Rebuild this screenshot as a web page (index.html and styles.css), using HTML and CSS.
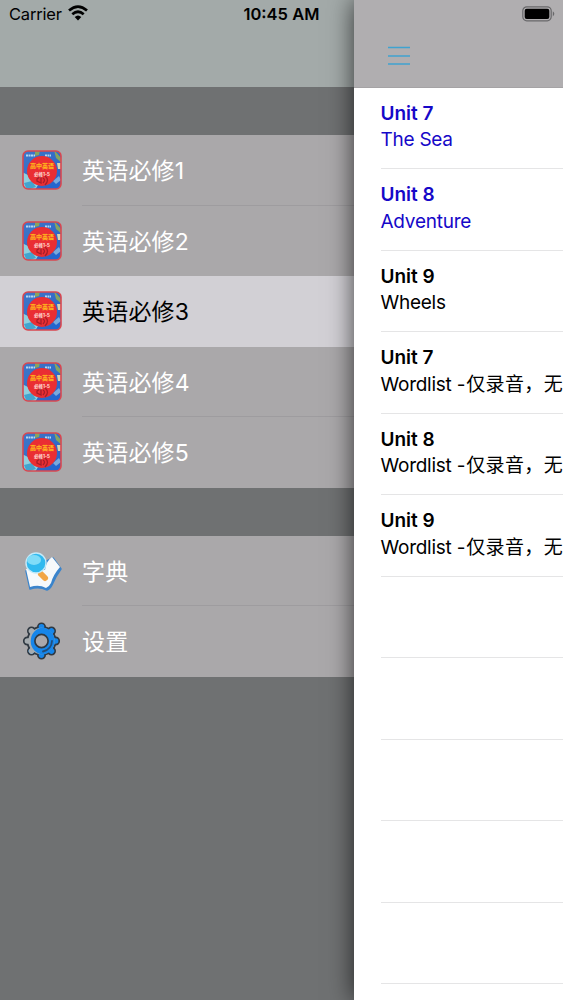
FILE: index.html
```
<!DOCTYPE html>
<html lang="zh-CN">
<head>
    <meta charset="UTF-8">
    <title>英语必修</title>
    <link rel="stylesheet" href="styles.css">
</head>
<body>
    <svg class="defs" width="0" height="0">
        <defs>
            <linearGradient id="sky" x1="0" y1="0" x2="1" y2="1">
                <stop offset="0" stop-color="#3f78c8"/>
                <stop offset="1" stop-color="#2860c8"/>
            </linearGradient>
            <clipPath id="bookClip"><rect x="1" y="1" width="38" height="38" rx="5"/></clipPath>
        </defs>
        <symbol id="book" viewBox="0 0 40 40">
            <g clip-path="url(#bookClip)">
                <rect width="40" height="40" fill="url(#sky)"/>
                <path d="M0 22l8 4 3 6 5 3-3 5H0z" fill="#8fd0dd"/>
                <path d="M2 33l8-2 4 6-9 3z" fill="#42a4cf"/>
                <path d="M13 0h5l-1 5-4 1zM32 0l8 9v4l-6-5z" fill="#86a460"/>
                <path d="M35 13h4v6h-3z" fill="#d8d5b0"/>
                <path d="M29 35l4-4 7 3v6H27z" fill="#2366cf"/>
                <path d="M31 31l6-5 2 4-5 4z" fill="#79a9dc"/>
                <path d="M4 5.5h9M23 5.5h6" stroke="#b5d7f0" stroke-width="1.8" stroke-dasharray="2 .5"/>
                <circle cx="20" cy="21" r="15" fill="#ea2e33"/>
                <path d="M15 29l4-3v7l-4-2zM21 28q3 2 0 5M23 26q5 4 0 9" fill="none" stroke="#a51f2a" stroke-width="1.3"/>
            </g>
            <rect x="1" y="1" width="38" height="38" rx="5" fill="none" stroke="#d94750" stroke-width="1.6"/>
        </symbol>
    </svg>

    <div class="app">
        <aside class="sidebar">
            <header class="sidebar-header">
                <span class="carrier">Carrier</span>
                <svg class="wifi" width="20" height="16" viewBox="0 0 20 16">
                    <path d="M1 5.6Q10-2.2 19 5.6M4.3 9.2Q10 4.3 15.7 9.2" fill="none" stroke="#000" stroke-width="2.7"/>
                    <path d="M6.7 12.1Q10 9 13.3 12.1L10 15.4z"/>
                </svg>
                <span class="time">10:45 AM</span>
            </header>

            <nav class="menu">
                <a class="item">
                    <svg class="icon" viewBox="0 0 40 40"><use href="#book"/><text class="book-title" x="20" y="18">高中英语</text><text class="book-sub" x="20" y="25.5">必修1-5</text></svg>
                    <span class="label">英语必修1</span>
                </a>
                <a class="item">
                    <svg class="icon" viewBox="0 0 40 40"><use href="#book"/><text class="book-title" x="20" y="18">高中英语</text><text class="book-sub" x="20" y="25.5">必修1-5</text></svg>
                    <span class="label">英语必修2</span>
                </a>
                <a class="item active">
                    <svg class="icon" viewBox="0 0 40 40"><use href="#book"/><text class="book-title" x="20" y="18">高中英语</text><text class="book-sub" x="20" y="25.5">必修1-5</text></svg>
                    <span class="label">英语必修3</span>
                </a>
                <a class="item">
                    <svg class="icon" viewBox="0 0 40 40"><use href="#book"/><text class="book-title" x="20" y="18">高中英语</text><text class="book-sub" x="20" y="25.5">必修1-5</text></svg>
                    <span class="label">英语必修4</span>
                </a>
                <a class="item">
                    <svg class="icon" viewBox="0 0 40 40"><use href="#book"/><text class="book-title" x="20" y="18">高中英语</text><text class="book-sub" x="20" y="25.5">必修1-5</text></svg>
                    <span class="label">英语必修5</span>
                </a>
            </nav>

            <nav class="menu">
                <a class="item">
                    <svg class="icon" viewBox="0 0 40 40">
                        <path d="M4 20l4 18q9-3 17 1 3-1 5-5 3-8 9-16l-8-11z" fill="#3a84cc" stroke="#3a84cc" stroke-width="1.5" stroke-linejoin="round"/>
                        <path d="M4 18l4 18q9-3 16 1 3-1 5-5 2-8 9-16l-8-10q-6 4-7 13-9-3-19-1z" fill="#f6f9fb"/>
                        <path d="M19 23l4 4" stroke="#f2a545" stroke-width="6" stroke-linecap="round"/>
                        <circle cx="14" cy="12" r="10" fill="#30b9ef" stroke="#c4e9f8" stroke-width="1.4"/>
                        <ellipse cx="12" cy="9" rx="7" ry="5" fill="#80dcf8"/>
                    </svg>
                    <span class="label">字典</span>
                </a>
                <a class="item">
                    <svg class="icon" viewBox="0 0 40 40">
                        <!-- dark outline -->
                        <circle cx="19.5" cy="20" r="15" fill="#303942"/>
                        <path class="teeth-outline" d="M19.5 5.900v28.200M5.400 20h28.200M9.500 10l20 20M29.500 10l-20 20"/>
                        <!-- body, left side stays grey -->
                        <path class="teeth" d="M19.5 5.900v28.200M19.5 20h14.100M19.5 20l10 10M29.5 10l-20 20"/>
                        <path class="teeth teeth-grey" d="M5.400 20h8M9.500 10l5 5M9.500 30l5-5"/>
                        <circle cx="19.5" cy="20" r="13.2" fill="#a7adb1"/>
                        <ellipse cx="20.7" cy="20" rx="12" ry="13.2" fill="#1686ea"/>
                        <circle cx="19.5" cy="20" r="6.6" fill="#aaa8ab" stroke="#303942" stroke-width="1.7"/>
                        <path d="M30 20q-.5 8.500-9 10.500" fill="none" stroke="#234d78" stroke-width="1.8" stroke-linecap="round"/>
                    </svg>
                    <span class="label">设置</span>
                </a>
            </nav>
        </aside>

        <main class="content">
            <header class="content-header">
                <svg class="battery" width="33" height="16" viewBox="0 0 33 16">
                    <rect x=".8" y=".8" width="28.4" height="14" rx="4" fill="none" stroke="#68686a" stroke-width="1.2"/>
                    <rect x="2.7" y="2.7" width="24.6" height="10.2" rx="2"/>
                    <path d="M30.8 5.2q3 2.6 0 5.2z" fill="#68686a"/>
                </svg>
                <svg class="burger" width="22" height="20" viewBox="0 0 22 20">
                    <path d="M0 1.5h22M0 10h22M0 18h22" stroke="#3fa3d0" stroke-width="1.3"/>
                </svg>
            </header>
            <ul class="units">
                <li class="unit read"><b>Unit 7</b><span>The Sea</span></li>
                <li class="unit read"><b>Unit 8</b><span>Adventure</span></li>
                <li class="unit"><b>Unit 9</b><span>Wheels</span></li>
                <li class="unit"><b>Unit 7</b><span>Wordlist -<i>仅录音，无</i></span></li>
                <li class="unit"><b>Unit 8</b><span>Wordlist -<i>仅录音，无</i></span></li>
                <li class="unit"><b>Unit 9</b><span>Wordlist -<i>仅录音，无</i></span></li>
                <li class="unit"></li>
                <li class="unit"></li>
                <li class="unit"></li>
                <li class="unit"></li>
                <li class="unit"></li>
            </ul>
        </main>
    </div>
</body>
</html>
```
FILE: styles.css
```
* {
    box-sizing: border-box;
}

body {
    margin: 0;
    font-family: Inter, "Noto Sans CJK SC", sans-serif;
    color: #000;
}

.defs {
    display: block;
}

.app {
    display: flex;
    width: 563px;
    height: 1000px;
    overflow: hidden;
}

.sidebar {
    width: 353.5px;
    flex-shrink: 0;
    background: #6f7172;
}

.sidebar-header {
    height: 87px;
    padding: 5px 0 0 9px;
    display: flex;
    align-items: flex-start;
    background: #a3aaa9;
}

.carrier {
    width: 59px;
    font-size: 16.5px;
    line-height: 19px;
    letter-spacing: -0.2px;
}

.time {
    margin-left: 155.5px;
    font-size: 16.5px;
    font-weight: 600;
    line-height: 19px;
    white-space: nowrap;
}

.menu {
    margin-top: 48px;
    background: #aaa8aa;
}

.item {
    display: flex;
    align-items: center;
    height: 70.5px;
    padding-left: 22px;
    color: #fff;
}

.icon {
    width: 40px;
    height: 40px;
    flex-shrink: 0;
}

.book-title {
    font-size: 6px;
    font-weight: 900;
    fill: #ffb51b;
    text-anchor: middle;
}

.book-sub {
    font-size: 4.5px;
    font-weight: 700;
    fill: #ffe1df;
    text-anchor: middle;
}

.teeth-outline {
    fill: none;
    stroke: #303942;
    stroke-width: 9;
    stroke-linecap: round;
}

.teeth {
    fill: none;
    stroke: #1686ea;
    stroke-width: 5.6;
    stroke-linecap: round;
}

.teeth-grey {
    stroke: #a7adb1;
}

.label {
    flex: 1;
    height: 100%;
    margin-left: 20px;
    border-bottom: 1px solid #9e9c9f;
    font-size: 23px;
    line-height: 72px;
    letter-spacing: 0.2px;
}

.item:last-child .label {
    border-bottom: none;
}

.active {
    background: #d2d0d5;
    color: #000;
}

.item:has(+ .active) .label,
.active .label {
    border-bottom: none;
}

.content {
    position: relative;
    flex: 1;
    min-width: 0;
    background: #fff;
    box-shadow: 0 0 24px rgba(0, 0, 0, 0.7);
}

.content-header {
    display: flex;
    flex-direction: column;
    height: 87.5px;
    padding: 6px 8.5px 0 34px;
    background: #b0aeb0;
    border-bottom: 1px solid #a5a3a5;
}

.battery {
    align-self: flex-end;
}

.burger {
    margin-top: 24px;
}

.units {
    list-style: none;
    margin: 0;
    padding: 0 0 0 27px;
}

.unit {
    display: flex;
    flex-direction: column;
    height: 81.5px;
    padding-top: 13px;
    border-bottom: 1px solid #e5e5e6;
    font-size: 19px;
    line-height: 26px;
    white-space: nowrap;
}

.unit b {
    font-weight: 600;
}

.unit span {
    margin-top: 0.5px;
    letter-spacing: -0.25px;
}

.unit i {
    font-style: normal;
    letter-spacing: 0.4px;
    margin-left: 1px;
}

.read {
    color: #1608c8;
}
```
